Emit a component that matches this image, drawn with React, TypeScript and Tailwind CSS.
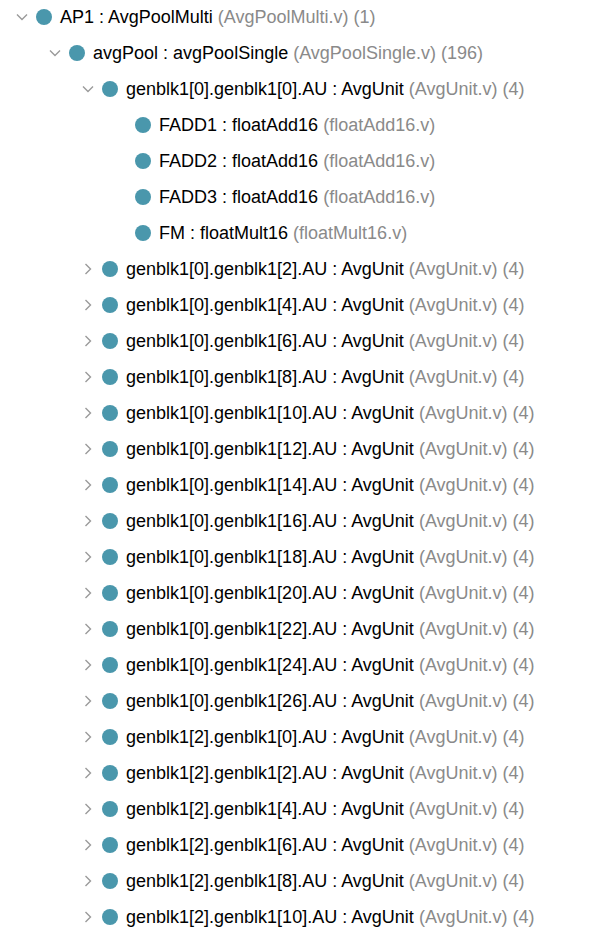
import React from "react";

type Node = {
  name: string;
  type: string;
  file: string;
  count?: number;
  level: number;
  open?: boolean;
  leaf?: boolean;
};

const units = [
  "genblk1[0].genblk1[2]",
  "genblk1[0].genblk1[4]",
  "genblk1[0].genblk1[6]",
  "genblk1[0].genblk1[8]",
  "genblk1[0].genblk1[10]",
  "genblk1[0].genblk1[12]",
  "genblk1[0].genblk1[14]",
  "genblk1[0].genblk1[16]",
  "genblk1[0].genblk1[18]",
  "genblk1[0].genblk1[20]",
  "genblk1[0].genblk1[22]",
  "genblk1[0].genblk1[24]",
  "genblk1[0].genblk1[26]",
  "genblk1[2].genblk1[0]",
  "genblk1[2].genblk1[2]",
  "genblk1[2].genblk1[4]",
  "genblk1[2].genblk1[6]",
  "genblk1[2].genblk1[8]",
  "genblk1[2].genblk1[10]",
];

const rows: Node[] = [
  { name: "AP1", type: "AvgPoolMulti", file: "AvgPoolMulti.v", count: 1, level: 0, open: true },
  { name: "avgPool", type: "avgPoolSingle", file: "AvgPoolSingle.v", count: 196, level: 1, open: true },
  { name: "genblk1[0].genblk1[0].AU", type: "AvgUnit", file: "AvgUnit.v", count: 4, level: 2, open: true },
  { name: "FADD1", type: "floatAdd16", file: "floatAdd16.v", level: 3, leaf: true },
  { name: "FADD2", type: "floatAdd16", file: "floatAdd16.v", level: 3, leaf: true },
  { name: "FADD3", type: "floatAdd16", file: "floatAdd16.v", level: 3, leaf: true },
  { name: "FM", type: "floatMult16", file: "floatMult16.v", level: 3, leaf: true },
  ...units.map((u) => ({ name: u + ".AU", type: "AvgUnit", file: "AvgUnit.v", count: 4, level: 2 })),
];

function Chevron({ open }: { open?: boolean }) {
  return (
    <svg width="12" height="12" viewBox="0 0 12 12" className="shrink-0">
      {open ? (
        <path d="M1 3.5 L6 8.5 L11 3.5" fill="none" stroke="#9a9a9a" strokeWidth="1.4" />
      ) : (
        <path d="M3.5 1 L8.5 6 L3.5 11" fill="none" stroke="#9a9a9a" strokeWidth="1.4" />
      )}
    </svg>
  );
}

function Row({ n }: { n: Node }) {
  const pad = 16 + n.level * 33;
  return (
    <div className="flex h-9 items-center whitespace-nowrap" style={{ paddingLeft: pad }}>
      <div className="flex w-[12px] shrink-0 items-center">{!n.leaf && <Chevron open={n.open} />}</div>
      <div className="ml-2 h-4 w-4 shrink-0 rounded-full bg-[#4a97ac]" />
      <span className="ml-[8px] text-[#000]">
        {n.name} : {n.type}
      </span>
      <span className="ml-[5px] text-[#8a8a8a]">({n.file})</span>
      {n.count !== undefined && <span className="ml-[5px] text-[#8a8a8a]">({n.count})</span>}
    </div>
  );
}

export default function App() {
  return (
    <div className="-mt-px min-h-screen bg-white font-['Liberation_Sans',Arial,sans-serif] text-[18px]">
      {rows.map((n, i) => (
        <Row key={i} n={n} />
      ))}
    </div>
  );
}
